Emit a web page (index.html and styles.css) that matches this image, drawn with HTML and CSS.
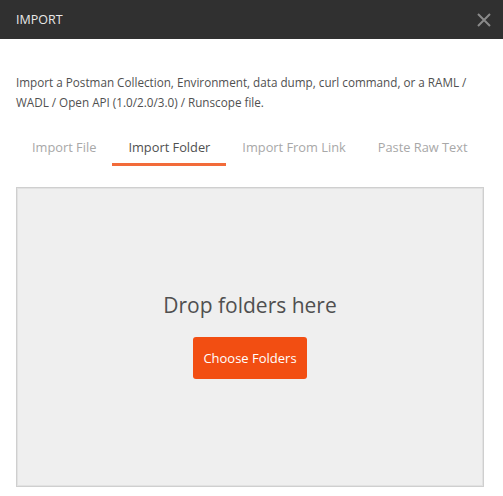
FILE: index.html
```html
<!DOCTYPE html>
<html>
<head>
<meta charset="utf-8">
<link rel="stylesheet" href="styles.css">
</head>
<body>
<div class="modal">
  <header class="modal-header">
    <span class="title">IMPORT</span>
    <svg class="close" width="14" height="14" viewBox="0 0 14 14"><path d="M1 1 L13 13 M13 1 L1 13" stroke="#8a8a8a" stroke-width="2" fill="none"/></svg>
  </header>
  <div class="modal-body">
    <p class="desc">Import a Postman Collection, Environment, data dump, curl command, or a RAML / WADL / Open API (1.0/2.0/3.0) / Runscope file.</p>
    <nav class="tabs">
      <span class="tab">Import File</span>
      <span class="tab active">Import Folder</span>
      <span class="tab">Import From Link</span>
      <span class="tab">Paste Raw Text</span>
    </nav>
    <div class="dropzone">
      <div class="drop-title">Drop folders here</div>
      <button class="btn">Choose Folders</button>
    </div>
  </div>
</div>
</body>
</html>
```
FILE: styles.css
```css
html, body {
  margin: 0;
  padding: 0;
  background: #ffffff;
}
body {
  font-family: "Open Sans", "Noto Sans", sans-serif;
  width: 503px;
  height: 496px;
  overflow: hidden;
}
.modal-header {
  height: 39px;
  background: #303030;
  display: flex;
  align-items: center;
  justify-content: space-between;
  padding: 0 12px 0 16px;
  box-sizing: border-box;
}
.title {
  color: #e8e8e8;
  font-size: 12.5px;
  line-height: 18px;
}
.close {
  display: block;
}
.modal-body {
  padding: 33px 16px 0 16px;
}
.desc {
  margin: 0;
  font-size: 11.7px;
  line-height: 20px;
  color: #505050;
  width: 465px;
}
.tabs {
  display: flex;
  margin-top: 26px;
}
.tab {
  flex-shrink: 0;
  white-space: nowrap;
  font-size: 12.82px;
  line-height: 18px;
  color: #a8a8a8;
  padding: 0 16px 7px 16px;
  border-bottom: 3px solid transparent;
}
.tab.active {
  color: #505050;
  border-bottom-color: #f26b3a;
}
.dropzone {
  margin-top: 21px;
  width: 468px;
  height: 300px;
  box-sizing: border-box;
  border: 1px solid #cfcfcf;
  box-shadow: inset 0 0 0 1px #e2e2e2;
  background: #efefef;
  display: flex;
  flex-direction: column;
  align-items: center;
  justify-content: center;
  padding-bottom: 4px;
}
.drop-title {
  font-size: 21px;
  line-height: 28px;
  color: #505050;
}
.btn {
  margin-top: 18px;
  width: 114px;
  height: 42px;
  border: none;
  border-radius: 3px;
  background: #f24e12;
  color: #ffffff;
  font-family: "Open Sans", "Noto Sans", sans-serif;
  font-size: 13px;
  font-weight: 400;
  padding: 0;
}
```
